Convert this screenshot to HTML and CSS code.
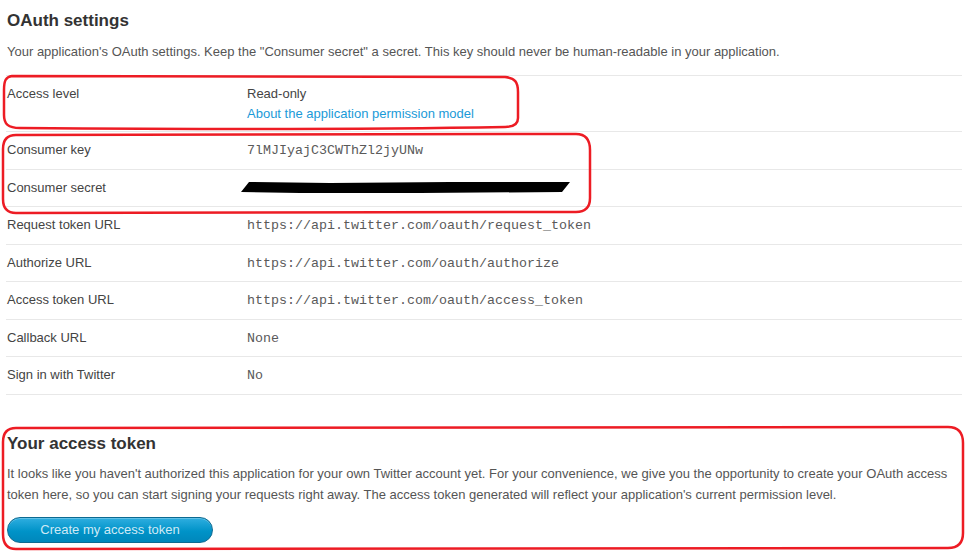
FILE: index.html
```html
<!DOCTYPE html>
<html>
<head>
<meta charset="utf-8">
<link rel="stylesheet" href="styles.css">
</head>
<body>
<div class="page">
  <section class="oauth">
    <h2 class="title">OAuth settings</h2>
    <p class="desc">Your application's OAuth settings. Keep the "Consumer secret" a secret. This key should never be human-readable in your application.</p>
    <div class="table">
      <div class="row">
        <div class="label">Access level</div>
        <div class="value">Read-only<br><a class="link" href="#">About the application permission model</a></div>
      </div>
      <div class="row">
        <div class="label">Consumer key</div>
        <div class="value mono">7lMJIyajC3CWThZl2jyUNw</div>
      </div>
      <div class="row">
        <div class="label">Consumer secret</div>
        <div class="value mono"><span class="hidden-secret">&nbsp;</span></div>
      </div>
      <div class="row">
        <div class="label">Request token URL</div>
        <div class="value mono">https://api.twitter.com/oauth/request_token</div>
      </div>
      <div class="row">
        <div class="label">Authorize URL</div>
        <div class="value mono">https://api.twitter.com/oauth/authorize</div>
      </div>
      <div class="row">
        <div class="label">Access token URL</div>
        <div class="value mono">https://api.twitter.com/oauth/access_token</div>
      </div>
      <div class="row">
        <div class="label">Callback URL</div>
        <div class="value mono">None</div>
      </div>
      <div class="row last">
        <div class="label">Sign in with Twitter</div>
        <div class="value mono">No</div>
      </div>
    </div>
  </section>
  <section class="token">
    <h2 class="title">Your access token</h2>
    <p class="desc">It looks like you haven't authorized this application for your own Twitter account yet. For your convenience, we give you the opportunity to create your OAuth access token here, so you can start signing your requests right away. The access token generated will reflect your application's current permission level.</p>
    <button class="btn">Create my access token</button>
  </section>

  <svg class="marks" width="970" height="554" viewBox="0 0 970 554">
    <path d="M241 192 L249 182 L330 183 L450 182 L570 182 L562 192 L420 193 L300 193 Z" fill="#000"/>
    <path d="M12 76 C120 75 300 76 505 77 C515 78 518 82 518 92 L518 118 C518 124 514 127 505 127 C350 130 150 129 20 128 C8 128 4 124 4 115 L4 90 C4 80 6 77 12 76 Z" fill="none" stroke="#ed1c24" stroke-width="2.5"/>
    <path d="M16 135 L576 134 C586 134 590 140 590 150 L590 198 C590 208 585 212 576 212 L16 213 C7 213 3 208 3 199 L3 149 C3 140 7 135 16 135 Z" fill="none" stroke="#ed1c24" stroke-width="2.5"/>
    <path d="M16 428 L948 427 C958 427 963 433 963 443 L963 533 C963 543 958 548 948 548 L16 549 C7 549 3 544 3 534 L3 442 C3 433 7 428 16 428 Z" fill="none" stroke="#ed1c24" stroke-width="2.5"/>
  </svg>
</div>
</body>
</html>
```

FILE: styles.css
```css
html, body {
  margin: 0;
  padding: 0;
  background: #fff;
}
.page {
  position: relative;
  width: 970px;
  height: 554px;
  overflow: hidden;
  font-family: "Liberation Sans", Arial, sans-serif;
  font-size: 13px;
  color: #444;
  padding: 0 8px 0 6px;
  box-sizing: border-box;
}
.title {
  margin: 0;
  padding: 11px 0 0 1px;
  font-size: 17px;
  line-height: 20px;
  font-weight: bold;
  color: #333;
}
.desc {
  margin: 10px 0 0 1px;
  line-height: 21px;
  color: #555;
}
.table {
  margin-top: 13px;
  border-top: 1px solid #e8e8e8;
}
.row {
  display: flex;
  padding: 8px 0 7px 1px;
  line-height: 20px;
  border-bottom: 1px solid #e8e8e8;
}
.label {
  width: 240px;
  flex: none;
}
.value {
  color: #444;
}
.mono {
  font-family: "Liberation Mono", "Courier New", monospace;
  font-size: 13.33px;
  line-height: 21.5px;
  color: #5a5a5a;
}
.link {
  color: #1a9ad8;
  text-decoration: none;
}
.hidden-secret {
  display: inline-block;
  width: 300px;
}
.token {
  margin-top: 36px;
}
.token .title {
  padding-top: 3px;
}
.token .desc {
  margin-top: 9px;
}
.btn {
  margin: 12px 0 0 1px;
  display: block;
  width: 206px;
  height: 26px;
  border-radius: 13px;
  border: 1px solid #0d6a91;
  background: linear-gradient(#2eaee0, #0093c8 55%, #0087bb);
  color: #cfe9f5;
  font-family: "Liberation Sans", Arial, sans-serif;
  font-size: 13px;
  line-height: 24px;
  padding: 0;
  box-shadow: inset 0 1px 0 rgba(255,255,255,0.25);
}
.marks {
  position: absolute;
  left: 0;
  top: 0;
  pointer-events: none;
}
```
